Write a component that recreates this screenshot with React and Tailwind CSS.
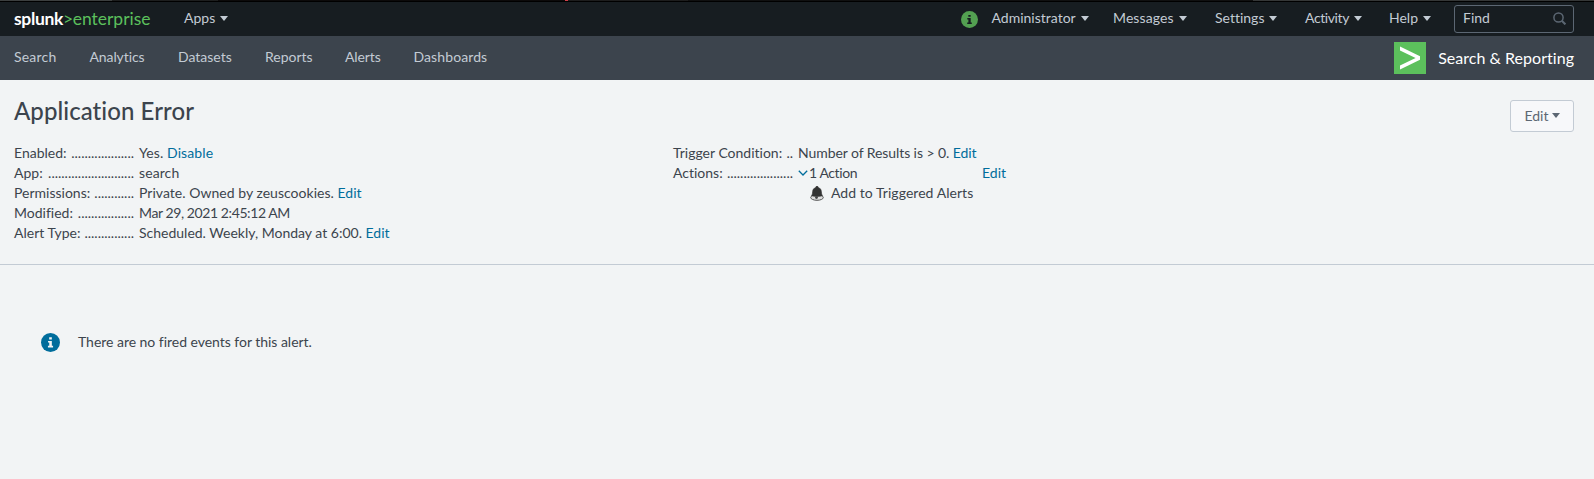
const Caret = ({ className = "" }) => (
  <svg viewBox="0 0 8 5" className={`h-[5px] w-2 fill-current ${className}`}>
    <path d="M0 0h8L4 5z" />
  </svg>
);

const InfoIcon = ({ className = "" }) => (
  <svg viewBox="0 0 20 20" className={`shrink-0 ${className}`}>
    <circle cx="10" cy="10" r="10" className="fill-current" />
    <path
      d="M8.6 4.6h2.8v2.3H8.6zM7.4 8.3h4v5.2h1.3v1.7H7.3v-1.7h1.4V10H7.4z"
      className="fill-[var(--mark)]"
    />
  </svg>
);

const Link = ({ children, className = "" }) => (
  <a href="#" className={`text-[#006d9c] ${className}`}>{children}</a>
);

const Row = ({ label, dots, children }) => (
  <div className="flex h-5 items-center whitespace-nowrap leading-5">
    <dt className="mr-[5px] flex w-[120px] justify-between">
      <span>{label}</span>
      <span>{".".repeat(dots)}</span>
    </dt>
    <dd className="flex items-center">{children}</dd>
  </div>
);

const menus = [
  { name: "Administrator", box: "w-[121.5px]", text: "" },
  { name: "Messages", box: "w-[102px]", text: "tracking-[0.1px]" },
  { name: "Settings", box: "w-[90px]", text: "" },
  { name: "Activity", box: "w-[84px]", text: "tracking-[-0.4px]" },
  { name: "Help", box: "w-[65px]", text: "" },
];

const tabs = [
  { name: "Search", box: "w-[75.5px]", text: "tracking-[0.2px]" },
  { name: "Analytics", box: "w-[88.5px]", text: "tracking-[-0.1px]" },
  { name: "Datasets", box: "w-[87px]", text: "" },
  { name: "Reports", box: "w-[80px]", text: "" },
  { name: "Alerts", box: "w-[68.5px]", text: "tracking-[-0.1px]" },
  { name: "Dashboards", box: "w-[76px]", text: "tracking-[0.1px]" },
];

export default function App() {
  return (
    <div className="flex h-[479px] w-[1594px] flex-col overflow-hidden bg-[#f2f4f5] font-['Lato',sans-serif] text-sm text-[#3c444d] [font-variant-ligatures:none]">
      <div className="flex h-px bg-[#0c0c0c]">
        <div className="w-[112px] bg-[#3c3f3f]" />
        <div className="w-[106px] bg-[#1d1e1e]" />
        <div className="w-[347px] bg-[#0c0a0a]" />
        <div className="w-[3px] bg-[#d0404a]" />
        <div className="w-[120px] bg-[#1d1d1d]" />
        <div className="w-[565px] bg-[#101010]" />
        <div className="grow bg-[#353737]" />
      </div>
      <div className="h-px bg-black" />
      <header className="flex h-[34px] items-center bg-[#171d21] pl-[14px] pr-5 text-[#c3cbd4]">
        <div className="flex w-[170px] items-center pb-px text-[17.5px]">
          <span className="font-bold tracking-[-0.35px] text-white">splunk</span>
          <span className="tracking-[-0.5px] text-[#5cc05c]">&gt;</span>
          <span className="text-[#5cc05c]">enterprise</span>
        </div>
        <div className="flex items-center pb-0.5">
          Apps
          <Caret className="ml-[5px]" />
        </div>
        <div className="ml-auto flex items-center">
          <InfoIcon className="mr-[14px] size-[17px] text-[#53a051] [--mark:#171d21]" />
          {menus.map((m) => (
            <div key={m.name} className={`flex items-center pb-0.5 ${m.box}`}>
              <span className={m.text}>{m.name}</span>
              <Caret className="ml-[5px]" />
            </div>
          ))}
          <div className="flex h-7 w-[120px] items-center justify-between rounded-[3px] border border-[#5c6773] pb-0.5 pl-2 pr-[7px]">
            Find
            <svg viewBox="0 0 13 13" className="size-[13px] fill-none stroke-[#5c6773] stroke-[1.5]">
              <circle cx="5.5" cy="5.5" r="4.6" />
              <path d="M8.8 8.8l3.6 3.6" className="stroke-2" />
            </svg>
          </div>
        </div>
      </header>

      <nav className="flex h-11 items-center bg-[#3c444d] pl-[14px] pr-5 text-[#c3cbd4]">
        {tabs.map((t) => (
          <a key={t.name} href="#" className={`pb-0.5 ${t.box} ${t.text}`}>{t.name}</a>
        ))}
        <div className="ml-auto flex items-center">
          <svg viewBox="0 0 32 32" className="mr-3 size-8">
            <path d="M0 0h32v32H0z" className="fill-[#5cc05c]" />
            <path d="M6 4.6 26 14.2v3.6L6 27.4v-3.8L21.6 16 6 8.4z" className="fill-white" />
          </svg>
          <span className="pb-px text-base tracking-[0.03px] text-white">Search &amp; Reporting</span>
        </div>
      </nav>

      <section className="h-[185px] border-b border-[#c3cbd4] pl-[14px] pr-5">
        <div className="flex h-[63px] justify-between">
          <h1 className="mt-[14px] text-2xl font-medium leading-[34px] tracking-[0.06px]">Application Error</h1>
          <button className="mt-5 flex h-8 w-16 items-center justify-center rounded-[3px] border border-[#c3cbd4] bg-[#f7f8fa] pb-px text-[#5c6773]">
            Edit
            <Caret className="ml-[3px]" />
          </button>
        </div>
        <div className="flex">
          <dl className="w-[659px]">
            <Row label="Enabled:" dots={19}><span className="tracking-[0.1px]">Yes.&nbsp;<Link>Disable</Link></span></Row>
            <Row label="App:" dots={26}><span className="tracking-[0.1px]">search</span></Row>
            <Row label="Permissions:" dots={12}><span className="tracking-[0.03px]">Private. Owned by zeuscookies.&nbsp;<Link>Edit</Link></span></Row>
            <Row label="Modified:" dots={17}><span className="tracking-[-0.41px]">Mar 29, 2021 2:45:12 AM</span></Row>
            <Row label="Alert Type:" dots={15}>Scheduled. Weekly, Monday at 6:00.&nbsp;<Link>Edit</Link></Row>
          </dl>
          <dl>
            <Row label="Trigger Condition:" dots={2}><span className="tracking-[-0.08px]">Number of Results is &gt; 0.&nbsp;<Link>Edit</Link></span></Row>
            <Row label="Actions:" dots={20}>
              <svg viewBox="0 0 10 6" className="mr-px h-[6px] w-[10px] fill-none stroke-[#006d9c] stroke-[1.3]">
                <path d="M.8.8 5 5 9.2.8" />
              </svg>
              <span className="w-[173px] tracking-[-0.4px]">1 Action</span>
              <Link>Edit</Link>
            </Row>
            <div className="flex h-5 items-center pl-[137px]">
              <svg viewBox="0 0 14 15" className="mr-[7px] h-[15px] w-[14px]">
                <ellipse cx="7" cy="11.5" rx="6.3" ry="2.8" fill="#ddd" stroke="#555" />
                <path d="M7 .3c.8 0 1.3.5 1.3 1.2 2 .6 3 2.3 3.1 4.300 0 1.600.3 2.900 1 3.900-1.600.6-3.400.8-5.400.8s-3.800-.2-5.400-.8c.7-1 1-2.300 1-3.900.1-2 1.100-3.700 3.100-4.300C5.700.8 6.200.3 7 .3z" fill="#333" stroke="#333" strokeWidth=".6" />
                <circle cx="6.500" cy="11.600" r="1.400" fill="#444" />
              </svg>
              <span className="tracking-[0.05px]">Add to Triggered Alerts</span>
            </div>
          </dl>
        </div>
      </section>

      <main className="flex items-center pl-[41px] pt-[67px]">
        <InfoIcon className="mr-[18px] size-[19px] text-[#006d9c] [--mark:#f2f4f5]" />
        <span className="tracking-[-0.03px]">There are no fired events for this alert.</span>
      </main>
    </div>
  );
}
